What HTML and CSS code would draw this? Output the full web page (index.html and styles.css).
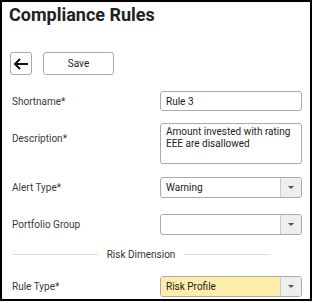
FILE: index.html
```html
<!DOCTYPE html>
<html lang="en">
<head>
  <meta charset="UTF-8">
  <title>Compliance Rules</title>
  <link rel="stylesheet" href="styles.css">
</head>
<body>
  <div class="frame">
    <h1 class="title">Compliance Rules</h1>

    <!-- Toolbar -->
    <div class="toolbar">
      <button class="back-btn" aria-label="Back">
        <svg width="16" height="12" viewBox="0 0 16 12">
          <path d="M15 6H2M7 1L2 6l5 5" fill="none" stroke="#111" stroke-width="2"/>
        </svg>
      </button>
      <button class="save-btn">Save</button>
    </div>

    <!-- Form -->
    <div class="form">
      <div class="row">
        <label class="label">Shortname*</label>
        <input class="field" type="text" value="Rule 3">
      </div>
      <div class="row row-top">
        <label class="label">Description*</label>
        <textarea class="field area">Amount invested with rating EEE are disallowed</textarea>
      </div>
      <div class="row row-select">
        <label class="label">Alert Type*</label>
        <div class="select">
          <span class="select-value">Warning</span>
          <span class="select-arrow"></span>
        </div>
      </div>
      <div class="row row-select">
        <label class="label">Portfolio Group</label>
        <div class="select">
          <span class="select-value"></span>
          <span class="select-arrow"></span>
        </div>
      </div>

      <div class="divider"><span>Risk Dimension</span></div>

      <div class="row">
        <label class="label">Rule Type*</label>
        <div class="select highlight">
          <span class="select-value">Risk Profile</span>
          <span class="select-arrow"></span>
        </div>
      </div>
    </div>
  </div>
</body>
</html>
```

FILE: styles.css
```css
/* Global */
body {
  margin: 0;
  font-family: Roboto, "Noto Sans", sans-serif;
  color: #333;
  background: #fff;
}

.frame {
  width: 308px;
  height: 297px;
  border: 2px solid #000;
  overflow: hidden;
}

.title {
  margin: 2px 0 0 7px;
  font-size: 18px;
  font-weight: bold;
  color: #222;
  line-height: 22px;
}

/* Toolbar */
.toolbar {
  display: flex;
  gap: 11px;
  margin: 26px 0 0 8px;
}

.back-btn, .save-btn {
  height: 23px;
  background: #fff;
  border: 1px solid #aaa;
  border-radius: 3px;
  padding: 0;
  display: flex;
  align-items: center;
  justify-content: center;
}

.back-btn {
  width: 22px;
}

.save-btn {
  width: 71px;
  font-family: Roboto, sans-serif;
  font-size: 10px;
  color: #222;
}

/* Form */
.form {
  margin-top: 16px;
  padding: 0 8px 0 10px;
}

.row {
  display: flex;
  align-items: center;
  margin-bottom: 12px;
}

.row-top {
  align-items: flex-start;
  margin-bottom: 13px;
}

.row-top .label {
  padding-top: 10px;
}

.row-select {
  margin-bottom: 16px;
}

.label {
  width: 148px;
  font-size: 10px;
  color: #3a3a3a;
}

.field {
  width: 142px;
  height: 20px;
  box-sizing: border-box;
  border: 1px solid #aaa;
  border-radius: 3px;
  padding: 0 5px;
  font-family: Roboto, sans-serif;
  font-size: 10px;
  color: #222;
}

.area {
  height: 41px;
  padding: 2px 5px;
  resize: none;
  line-height: 12px;
}

.select {
  width: 142px;
  height: 21px;
  box-sizing: border-box;
  border: 1px solid #aaa;
  border-radius: 3px;
  display: flex;
  overflow: hidden;
}

.select-value {
  flex: 1;
  padding-left: 5px;
  font-size: 10px;
  line-height: 19px;
  color: #222;
}

.select-arrow {
  width: 20px;
  background: #eee;
  border-left: 1px solid #ccc;
  position: relative;
}

.select-arrow::after {
  content: "";
  position: absolute;
  left: 7px;
  top: 8px;
  border-left: 3px solid transparent;
  border-right: 3px solid transparent;
  border-top: 3px solid #555;
}

.highlight .select-value {
  background: #fcedaa;
}

/* Divider */
.divider {
  display: flex;
  align-items: center;
  gap: 9px;
  margin: -2px 32px 16px 0;
  font-size: 10px;
  color: #333;
}

.divider::before, .divider::after {
  content: "";
  flex: 1;
  border-top: 1px solid #ddd;
}
```
